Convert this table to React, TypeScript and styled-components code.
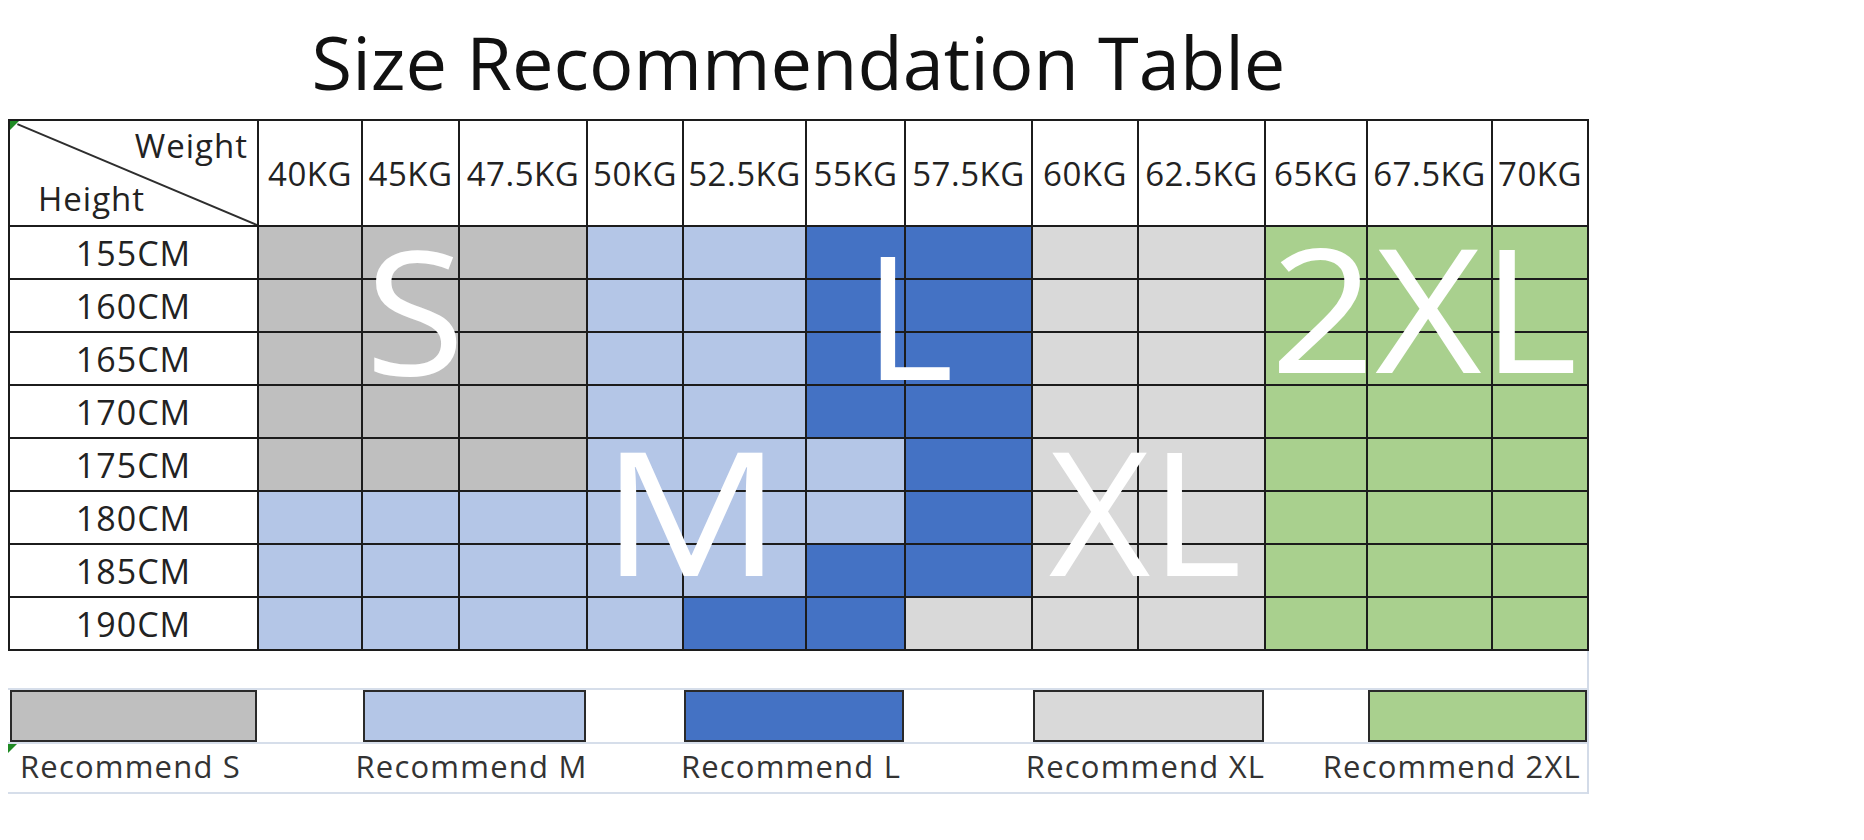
import React from 'react';
import styled, { createGlobalStyle, css } from 'styled-components';

const GlobalStyle = createGlobalStyle`
  html, body {
    margin: 0;
    padding: 0;
    background: #ffffff;
  }

  body {
    font-family: 'Open Sans', 'Noto Sans', 'Liberation Sans', sans-serif;
    color: #1a1a1a;
  }
`;

// spreadsheet column widths (px), first one is the height label column
const COLUMNS = [247, 102, 95, 126, 94, 121, 97, 125, 104, 125, 100, 123, 94];
const columnTemplate = COLUMNS.map((w) => `${w}px`).join(' ');

const WEIGHTS = ['40KG', '45KG', '47.5KG', '50KG', '52.5KG', '55KG', '57.5KG', '60KG', '62.5KG', '65KG', '67.5KG', '70KG'];
const HEIGHTS = ['155CM', '160CM', '165CM', '170CM', '175CM', '180CM', '185CM', '190CM'];

type SizeCode = 'S' | 'M' | 'L' | 'X' | 'G';

const FILL: Record<SizeCode, string> = {
  S: '#bfbfbf',
  M: '#b4c6e7',
  L: '#4472c4',
  X: '#d9d9d9',
  G: '#a9d08e',
};

// one string per height row, one letter per weight column
const CHART = [
  'SSSMMLLXXGGG',
  'SSSMMLLXXGGG',
  'SSSMMLLXXGGG',
  'SSSMMLLXXGGG',
  'SSSMMMLXXGGG',
  'MMMMMMLXXGGG',
  'MMMMMLLXXGGG',
  'MMMMLLXXXGGG',
];

const MARKS = [
  { text: 'S', x: 357, y: 103, sx: 1.06 },
  { text: 'L', x: 856, y: 108, sx: 1 },
  { text: '2XL', x: 1262, y: 101, sx: 1.07 },
  { text: 'M', x: 593, y: 304, sx: 1.17 },
  { text: 'XL', x: 1041, y: 304, sx: 1.02 },
];

const LEGEND: { label: string; code: SizeCode; span: string; align?: string }[] = [
  { label: 'Recommend S', code: 'S', span: '1 / 2' },
  { label: 'Recommend M', code: 'M', span: '3 / 5' },
  { label: 'Recommend L', code: 'L', span: '6 / 8' },
  { label: 'Recommend XL', code: 'X', span: '9 / 11' },
  { label: 'Recommend 2XL', code: 'G', span: '12 / 14', align: 'flex-end' },
];

const cornerMark = css`
  &::before {
    content: '';
    position: absolute;
    top: 0;
    left: 0;
    width: 0;
    height: 0;
    border-top: 9px solid #1f8a24;
    border-right: 9px solid transparent;
    z-index: 2;
  }
`;

const Page = styled.div`
  padding: 25px 0 40px 8px;
`;

const Sheet = styled.div`
  width: 1581px;
`;

const Title = styled.h1`
  margin: 0 0 20px;
  font-size: 74px;
  font-weight: 400;
  line-height: 1;
  text-align: center;
  color: #111111;
`;

const TableWrap = styled.div`
  position: relative;
`;

const Table = styled.div`
  display: grid;
  grid-template-columns: ${columnTemplate};
  grid-template-rows: 104px repeat(8, 51px);
  gap: 2px;
  padding: 2px;
  background: #1c1c1c;
`;

const cellText = css`
  font-size: 33px;
  letter-spacing: 0.5px;
  line-height: 1;
  color: #222222;
`;

const Corner = styled.div`
  position: relative;
  display: flex;
  flex-direction: column;
  justify-content: space-between;
  padding: 8px 9px 10px 28px;
  background: #ffffff;
  ${cellText};
  letter-spacing: 1px;
  ${cornerMark};
`;

const Diagonal = styled.svg`
  position: absolute;
  inset: 0;
  width: 100%;
  height: 100%;
`;

const CornerLabel = styled.span<{ $end?: boolean }>`
  position: relative;
  align-self: ${(p) => (p.$end ? 'flex-end' : 'flex-start')};
`;

const HeadCell = styled.div`
  display: flex;
  align-items: center;
  justify-content: center;
  overflow: hidden;
  background: #ffffff;
  white-space: nowrap;
  ${cellText};
`;

const RowLabel = styled(HeadCell)`
  font-size: 34px;
  letter-spacing: 1px;
`;

const DataCell = styled.div<{ $fill: string }>`
  background: ${(p) => p.$fill};
`;

const BigMark = styled.div<{ $x: number; $y: number; $sx: number }>`
  position: absolute;
  left: ${(p) => p.$x}px;
  top: ${(p) => p.$y}px;
  font-size: 172px;
  line-height: 1;
  color: #ffffff;
  white-space: nowrap;
  transform: scaleX(${(p) => p.$sx});
  transform-origin: left top;
  pointer-events: none;
`;

const LegendArea = styled.div`
  padding-top: 37px;
  border-right: 2px solid #d3dbe8;
`;

const LegendRow = styled.div<{ $h: number }>`
  display: grid;
  grid-template-columns: ${columnTemplate};
  column-gap: 2px;
  height: ${(p) => p.$h}px;
  padding: 0 2px;
  border-top: 2px solid #d6deea;
`;

const LabelRow = styled(LegendRow)`
  border-bottom: 2px solid #d6deea;
`;

const Swatch = styled.div<{ $span: string; $fill: string }>`
  grid-column: ${(p) => p.$span};
  background: ${(p) => p.$fill};
  border: 2px solid #2a2a2a;
`;

const LegendLabel = styled.div<{ $span: string; $align?: string; $mark?: boolean }>`
  position: relative;
  grid-column: ${(p) => p.$span};
  display: flex;
  align-items: center;
  justify-content: ${(p) => p.$align || 'center'};
  padding: 0 6px 4px 0;
  font-size: 31px;
  letter-spacing: 1.2px;
  line-height: 1;
  color: #333333;
  white-space: nowrap;
  ${(p) => p.$mark && cornerMark};
  &::before {
    left: -2px;
  }
`;

export default function App() {
  return (
    <Page>
      <GlobalStyle />
      <Sheet>
        <Title>Size Recommendation Table</Title>

        <TableWrap>
          <Table>
            <Corner>
              <Diagonal viewBox="0 0 100 100" preserveAspectRatio="none">
                <line
                  x1="3"
                  y1="3"
                  x2="100"
                  y2="100"
                  stroke="#2e2e2e"
                  strokeWidth="2"
                  vectorEffect="non-scaling-stroke"
                />
              </Diagonal>
              <CornerLabel $end>Weight</CornerLabel>
              <CornerLabel>Height</CornerLabel>
            </Corner>
            {WEIGHTS.map((w) => (
              <HeadCell key={w}>{w}</HeadCell>
            ))}

            {HEIGHTS.map((h, r) => (
              <React.Fragment key={h}>
                <RowLabel>{h}</RowLabel>
                {CHART[r].split('').map((code, c) => (
                  <DataCell key={c} $fill={FILL[code as SizeCode]} />
                ))}
              </React.Fragment>
            ))}
          </Table>

          {MARKS.map((m) => (
            <BigMark key={m.text} $x={m.x} $y={m.y} $sx={m.sx}>
              {m.text}
            </BigMark>
          ))}
        </TableWrap>

        <LegendArea>
          <LegendRow $h={52}>
            {LEGEND.map((item) => (
              <Swatch key={item.code} $span={item.span} $fill={FILL[item.code]} />
            ))}
          </LegendRow>
          <LabelRow $h={48}>
            {LEGEND.map((item, i) => (
              <LegendLabel key={item.code} $span={item.span} $align={item.align} $mark={i === 0}>
                {item.label}
              </LegendLabel>
            ))}
          </LabelRow>
        </LegendArea>
      </Sheet>
    </Page>
  );
}
